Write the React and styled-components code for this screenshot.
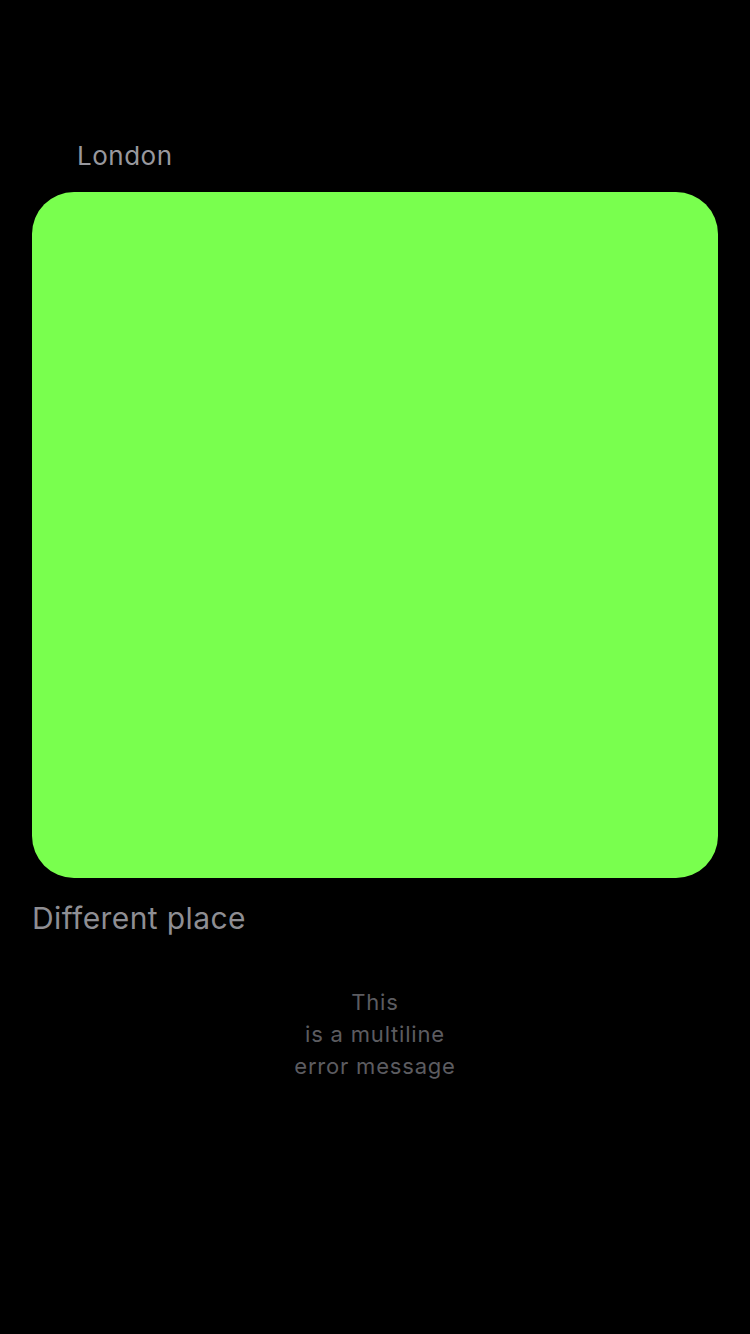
import React from "react";
import styled, { createGlobalStyle } from "styled-components";

const Global = createGlobalStyle`
  html, body { margin: 0; padding: 0; background: #000; }
  body { font-family: Inter, "Noto Sans", sans-serif; }
`;

const Page = styled.div`
  width: 750px;
  height: 1334px;
  background: #000;
  display: flex;
  flex-direction: column;
  padding: 140px 32px 0;
  box-sizing: border-box;
`;

const Label = styled.div`
  color: #98989e;
  font-size: 26px;
  letter-spacing: 0.5px;
  line-height: 32px;
  padding-left: 45px;
  margin-bottom: 20px;
`;

const Swatch = styled.div`
  width: 686px;
  height: 686px;
  border-radius: 42px;
  background: #79ff4e;
`;

const Title = styled.div`
  color: #8e8e93;
  font-size: 30px;
  letter-spacing: 0.4px;
  line-height: 36px;
  margin-top: 22px;
`;

const Error = styled.div`
  color: #5c5c60;
  font-size: 22px;
  letter-spacing: 0.8px;
  line-height: 32px;
  text-align: center;
  margin-top: 50px;
  white-space: pre-line;
`;

export default function App() {
  return (
    <>
      <Global />
      <Page>
        <Label>London</Label>
        <Swatch />
        <Title>Different place</Title>
        <Error>{"This\nis a multiline\nerror message"}</Error>
      </Page>
    </>
  );
}
